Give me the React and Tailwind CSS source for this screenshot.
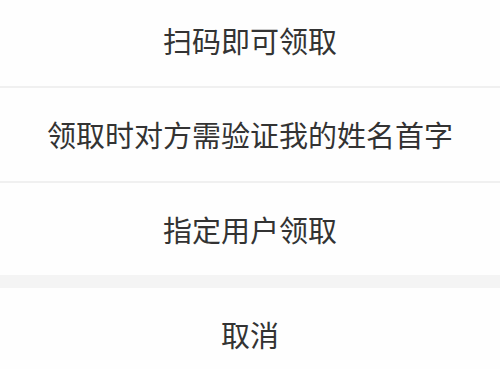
export default function App() {
  const font = { fontFamily: '"Noto Sans CJK SC", "Noto Sans", sans-serif' };
  return (
    <div className="w-[500px] h-[369px] overflow-hidden bg-[#fefefe] text-[#333333]" style={font}>
      <div className="h-[86px] pb-[6px] flex items-center justify-center text-[29px] leading-none">扫码即可领取</div>
      <div className="h-[2px] bg-[#f0f0f0]"></div>
      <div className="h-[93px] flex items-center justify-center text-[29px] leading-none">领取时对方需验证我的姓名首字</div>
      <div className="h-[2px] bg-[#f0f0f0]"></div>
      <div className="h-[92px] flex items-center justify-center text-[29px] leading-none">指定用户领取</div>
      <div className="h-[13px] bg-[#f4f4f4]"></div>
      <div className="h-[92px] flex items-center justify-center text-[29px] leading-none">取消</div>
    </div>
  );
}
